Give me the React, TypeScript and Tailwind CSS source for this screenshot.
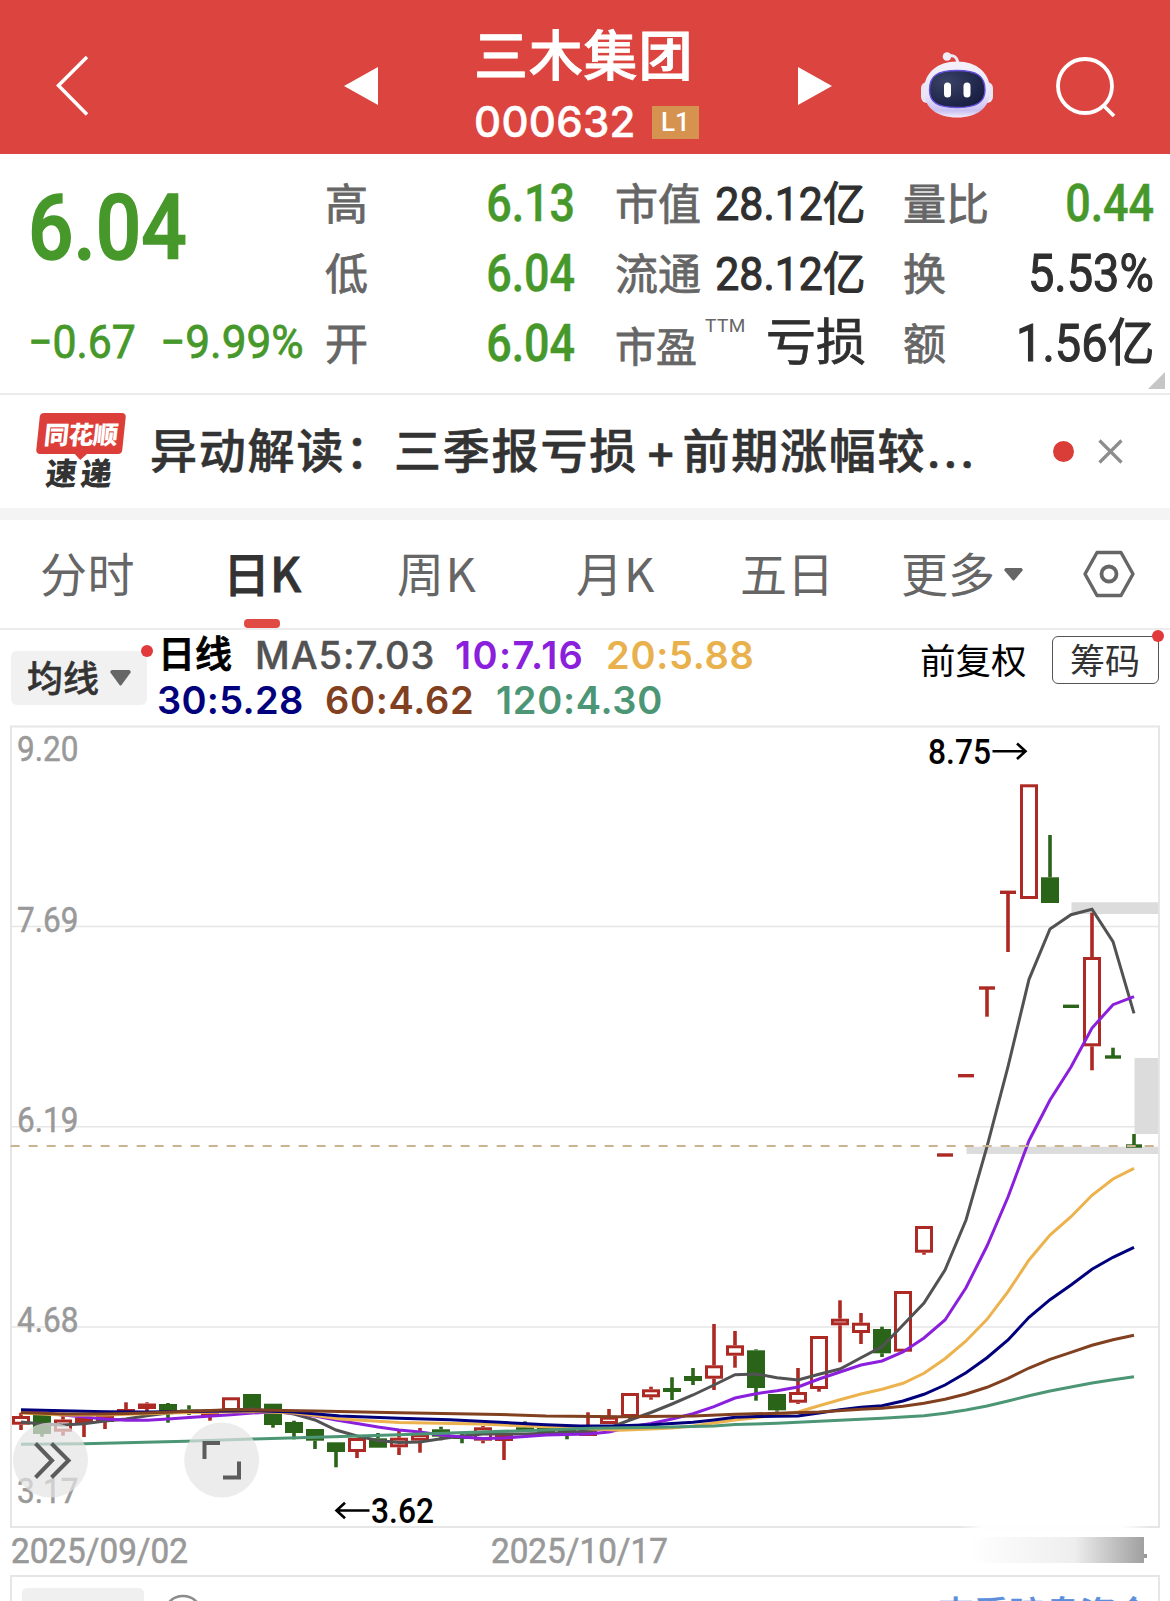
import type { ReactNode } from 'react';

const RED = '#ad2924';
const GREEN = '#296418';

type Kind = 'up' | 'down' | 'upFlat' | 'downFlat';
// kind, body top, body bottom, wick high, wick low
type Candle = [Kind, number, number, number, number];

const STEP = 21;
const FIRST_X = 21;

const candles: Candle[] = [
    ['up', 1416, 1424.7, 1412.7, 1430],
    ['down', 1414, 1434, 1414, 1436.7],
    ['up', 1419.5, 1431.7, 1412.7, 1435.7],
    ['up', 1417.5, 1423.5, 1417.5, 1437],
    ['up', 1416, 1422, 1410.7, 1429],
    ['up', 1409, 1415, 1402.3, 1415],
    ['up', 1403.5, 1409, 1402.3, 1411],
    ['down', 1404, 1411, 1403, 1422.7],
    ['down', 1409.5, 1412, 1405.3, 1415],
    ['up', 1411, 1416, 1411, 1420.7],
    ['up', 1397.3, 1411, 1397.3, 1411],
    ['down', 1394, 1410, 1394, 1410],
    ['down', 1403.7, 1425, 1403.7, 1427.7],
    ['down', 1422, 1433, 1420.7, 1439.3],
    ['down', 1429, 1440.7, 1429, 1449],
    ['down', 1442.3, 1452, 1442.3, 1467.3],
    ['up', 1438, 1452, 1438, 1458],
    ['down', 1438.3, 1447.7, 1433, 1447.7],
    ['up', 1437.7, 1447.3, 1430.7, 1455],
    ['up', 1434, 1440.7, 1428, 1452.7],
    ['down', 1429.3, 1436.7, 1426.7, 1440.3],
    ['down', 1435, 1439, 1432.7, 1443.3],
    ['up', 1427.3, 1440.7, 1426, 1443.3],
    ['up', 1434, 1441, 1434, 1460],
    ['down', 1427.3, 1431, 1421.3, 1431],
    ['down', 1427.5, 1434, 1427.5, 1434],
    ['down', 1430, 1435, 1430, 1439.3],
    ['up', 1430, 1436, 1412.3, 1436],
    ['up', 1416.7, 1424, 1409, 1424],
    ['up', 1393, 1417, 1393, 1420],
    ['up', 1389.3, 1397.3, 1386.7, 1399.7],
    ['down', 1388, 1392, 1377.3, 1400],
    ['down', 1376, 1381, 1368, 1385],
    ['up', 1365.3, 1378.7, 1324, 1390],
    ['up', 1345.3, 1355.7, 1331, 1367.7],
    ['down', 1350.3, 1388, 1349.3, 1400.7],
    ['down', 1394, 1410.3, 1394, 1411.7],
    ['up', 1392, 1402.7, 1368, 1404],
    ['up', 1336, 1389, 1336, 1391.7],
    ['up', 1318.7, 1325.3, 1300.3, 1362.3],
    ['up', 1322.7, 1333, 1313, 1344],
    ['down', 1329, 1353.3, 1326.7, 1357],
    ['up', 1291, 1351.7, 1291, 1351.7],
    ['up', 1226, 1252.7, 1226, 1254.7],
    ['upFlat', 1155, 1155, 1155, 1155],
    ['upFlat', 1075.7, 1075.7, 1075.7, 1075.7],
    ['upFlat', 988, 988, 988, 1016.7],
    ['upFlat', 892.3, 892.3, 892.3, 952],
    ['up', 784.3, 899, 784.3, 899],
    ['down', 877.3, 903, 835, 903],
    ['downFlat', 1006.3, 1006.3, 1006.3, 1006.3],
    ['up', 957, 1046.3, 912.7, 1070.3],
    ['downFlat', 1057, 1057, 1047.7, 1057],
    ['downFlat', 1146, 1146, 1134, 1146],
];

const averages = [
    {
        color: '#525252',
        points: '21,1422 42,1424 63,1425 84,1423.7 105,1421 126,1419 147,1415.7 168,1413 189,1411.5 231,1410 252,1409 273,1411 294,1414 315,1420 336,1430 357,1436 378,1440.5 399,1442.5 420,1442 441,1438.7 462,1436 483,1434 525,1434 567,1432.5 588,1431 609,1428 630,1420 651,1412.5 672,1404 693,1395 714,1385 735,1374.7 756,1374 777,1377.7 798,1380 819,1374.3 840,1369 861,1357.7 882,1346.7 903,1325 924,1303 945,1270 966,1220 987,1146.7 1008,1066.7 1029,979.3 1050,929 1071,914.7 1092,909.3 1113,941.7 1134,1013.3',
    },
    {
        color: '#8a20dc',
        points: '21,1411 42,1413 63,1415 84,1417 105,1419 126,1420.3 147,1420.3 168,1419 189,1417.5 231,1414.7 252,1413 273,1412 294,1413 315,1416 336,1420 357,1423.5 378,1427 399,1430 420,1432 441,1435 462,1437 483,1438.5 504,1438 546,1435 588,1434 609,1432 630,1427 651,1423.5 672,1419 693,1413.7 714,1406.7 735,1398 756,1393.7 777,1390.7 798,1387 819,1379 840,1372 861,1365 882,1361 903,1352 924,1338 945,1320 966,1287.7 987,1246 1008,1197 1029,1140.7 1050,1100 1071,1067 1092,1028 1113,1004.7 1134,996.7',
    },
    {
        color: '#ecb24e',
        points: '21,1413 63,1415 105,1415 168,1413 252,1411.5 294,1413 315,1415.5 340,1419 399,1422.5 480,1424 546,1426.7 600,1429.3 620,1430.3 651,1429 672,1428 693,1426 714,1423 735,1420 756,1417.7 777,1414.5 798,1412 819,1405.7 840,1399.7 861,1394 882,1389.3 903,1383.3 924,1373.3 945,1358.7 966,1341 987,1319.3 1008,1291.7 1029,1260 1050,1235 1071,1216.7 1092,1195.3 1113,1179 1134,1168.3',
    },
    {
        color: '#00007d',
        points: '21,1409.7 105,1411.8 147,1412 189,1411.5 252,1410.7 294,1412 340,1416 399,1418.3 450,1419.8 546,1424.7 580,1426 620,1425.7 651,1424.7 693,1422.3 714,1420 735,1417.3 756,1416.5 777,1416.3 798,1416 819,1413 840,1409.7 861,1407.3 882,1405.7 903,1401 924,1394.3 945,1385 966,1372.7 987,1357.7 1008,1340 1029,1317.3 1050,1299.7 1071,1285 1092,1269.3 1113,1257.3 1134,1247.3',
    },
    {
        color: '#81401f',
        points: '21,1412.5 63,1414 105,1414 147,1413 189,1411.3 231,1409.7 315,1411 399,1412.7 500,1414.5 546,1416 620,1416.7 693,1416 735,1414.3 777,1413.3 819,1412 861,1409.3 882,1408.3 903,1406.3 924,1403.3 945,1399.3 966,1394 987,1387.3 1008,1378.3 1029,1368 1050,1359.3 1071,1352.3 1092,1345.3 1113,1339.7 1134,1335.3',
    },
    {
        color: '#4c9676',
        points: '21,1444.3 84,1443.7 186,1441.3 252,1439 333,1436.7 399,1434.7 450,1433 546,1430 590,1428.3 660,1427.3 714,1426 735,1424.5 777,1423.3 840,1420.3 882,1418.3 924,1415.7 945,1413.3 966,1410 987,1406 1008,1401 1029,1395.7 1050,1391 1071,1387 1092,1383 1113,1379.7 1134,1376.7',
    },
];

const CandleMark = ({ candle, x }: { candle: Candle; x: number }) => {
    const [kind, top, bottom, high, low] = candle;
    const color = kind === 'up' || kind === 'upFlat' ? RED : GREEN;
    const flat = kind === 'upFlat' || kind === 'downFlat';
    return (
        <g stroke={color} strokeWidth={3.6}>
            {high < top && <line x1={x} x2={x} y1={high} y2={top} />}
            {low > bottom && <line x1={x} x2={x} y1={bottom} y2={low} />}
            {flat && <line x1={x - 8} x2={x + 8} y1={top} y2={top} strokeWidth={3.4} />}
            {kind === 'up' && (
                <rect x={x - 7.5} y={top + 1.5} width={15} height={bottom - top - 3} fill="#fff" strokeWidth={3} />
            )}
            {kind === 'down' && <rect x={x - 9} y={top} width={18} height={bottom - top} fill={color} stroke="none" />}
        </g>
    );
};

const AxisText = ({ x, y, children }: { x: number; y: number; children: string }) => (
    <text x={x} y={y} textLength={61.5} lengthAdjust="spacingAndGlyphs" fontSize={35.5} fill="#999" stroke="#999" strokeWidth={0.5}>
        {children}
    </text>
);

const KLineChart = () => (
    <svg className="block" width={1170} height={806} viewBox="0 724 1170 806" fontFamily="Roboto, sans-serif">
        <defs>
            <linearGradient id="fade">
                <stop offset="0" stopColor="#fff" stopOpacity="0" />
                <stop offset="0.12" stopColor="#fefefe" />
                <stop offset="0.85" stopColor="#fefefe" />
                <stop offset="1" stopColor="#fff" stopOpacity="0" />
            </linearGradient>
        </defs>
        <g stroke="#e6e6e6" fill="none">
            <rect x={11} y={726.5} width={1148} height={800.5} strokeWidth={2} />
            <path d="M11 926.5H1159M11 1126.7H1159M11 1327H1159" strokeWidth={1.5} />
        </g>
        <g fill="#dcdcdc">
            <rect x={1071.5} y={902.3} width={86.5} height={11.7} />
            <rect x={1134.5} y={1058} width={23.5} height={76} />
            <rect x={966.5} y={1146.7} width={191.5} height={7.3} />
        </g>
        <AxisText x={17} y={761}>9.20</AxisText>
        <AxisText x={17} y={931.5}>7.69</AxisText>
        <AxisText x={17} y={1132}>6.19</AxisText>
        <AxisText x={17} y={1332}>4.68</AxisText>
        <AxisText x={17} y={1502.5}>3.17</AxisText>

        {candles.map((candle, i) => (
            <CandleMark key={i} candle={candle} x={FIRST_X + i * STEP} />
        ))}
        {averages.map(line => (
            <polyline key={line.color} points={line.points} fill="none" stroke={line.color} strokeWidth={3} />
        ))}
        <line x1={10.7} x2={1158} y1={1146} y2={1146} stroke="#c9b48f" strokeWidth={1.8} strokeDasharray="9 9" />

        <g fontWeight={500} fontSize={35} fill="#000">
            <text x={928} y={764} textLength={63} lengthAdjust="spacingAndGlyphs">8.75</text>
            <text x={371} y={1522.5} textLength={63} lengthAdjust="spacingAndGlyphs">3.62</text>
        </g>
        <g stroke="#000" strokeWidth={2.6} fill="none">
            <path d="M992.5 751.3H1025M1017 743.5L1025.5 751.3L1017 759" />
            <path d="M369.5 1510.5H337M345 1502.7L336.5 1510.5L345 1518.3" />
        </g>

        {/* floating chart controls */}
        <g fill="#e4e4e4" fillOpacity={0.7}>
            <circle cx={50.5} cy={1460} r={37.5} />
            <circle cx={221.7} cy={1460} r={37.5} />
        </g>
        <g fill="none" stroke="#5c5c5c" strokeWidth={4}>
            <path d="M35.5 1443.5L52 1460.5L35.5 1477.5M51.5 1443.5L68.5 1460.5L51.5 1477.5" />
            <path d="M220 1443H204.5V1459M223 1477.5H239V1461.5" />
        </g>
        <rect x={960} y={1524} width={190} height={6} fill="url(#fade)" />
    </svg>
);

const RobotIcon = () => (
    <svg width={74} height={68} viewBox="0 0 74 68">
        <defs>
            <linearGradient id="shell" x1="0" y1="0" x2="0" y2="1">
                <stop offset="0" stopColor="#f4f1fb" />
                <stop offset="0.6" stopColor="#e9e4f8" />
                <stop offset="0.88" stopColor="#c9c0f2" />
                <stop offset="1" stopColor="#f3eefb" />
            </linearGradient>
            <radialGradient id="visor" cx="0.3" cy="0.3" r="0.8">
                <stop offset="0" stopColor="#3a4266" />
                <stop offset="1" stopColor="#161d40" />
            </radialGradient>
        </defs>
        <path d="M26 5.5C33 2.5 38 6 38 14" fill="none" stroke="#ece8f6" strokeWidth={3} />
        <circle cx={27} cy={5.5} r={4.3} fill="#f0edf7" />
        <rect x={1} y={31} width={12} height={21} rx={6} fill="#e9e5f4" />
        <rect x={61} y={31} width={12} height={21} rx={6} fill="#e9e5f4" />
        <path d="M37 10.500C57 10.500 70 22 70 39.500C70 57 57 66.500 37 66.500C17 66.500 4 57 4 39.500C4 22 17 10.500 37 10.500Z" fill="url(#shell)" />
        <path d="M37 19.500C57 19.500 65 25 65 39C65 51 57 56.500 37 56.500C17 56.500 9.500 51 9.500 39C9.500 25 17 19.500 37 19.500Z" fill="url(#visor)" stroke="#6450dc" strokeWidth={1.400} />
        <rect x={24} y={31.500} width={7} height={15} rx={3.500} fill="#fff" />
        <rect x={43.500} y={31.500} width={7} height={15} rx={3.500} fill="#fff" />
    </svg>
);

const Header = () => (
    <header className="flex h-[154px] items-center bg-[#dc443f] pt-[18px] text-white">
        <svg className="ml-[54px]" width={38} height={64} viewBox="0 0 38 64" fill="none" stroke="#fff" strokeWidth={3.5}>
            <path d="M33 3L4.500 31.500L33 60.500" />
        </svg>
        <svg className="ml-[252px]" width={34} height={38} viewBox="0 0 34 38" fill="#fff">
            <path d="M0 19L34 0V38Z" />
        </svg>
        <div className="-mt-[18px] ml-[96px] w-[225px]">
            <h1 className="h-[68px] whitespace-nowrap pt-[5px] text-[54px] font-medium leading-[78px] tracking-[0.8px] [-webkit-text-stroke:0.8px_white]">
                三木集团
            </h1>
            <div className="mt-[22px] flex h-[46px] items-center">
                <span className="font-['Inter'] text-[42px] font-medium leading-none tracking-[0.3px] [-webkit-text-stroke:0.5px_white]">000632</span>
                <span className="ml-[16px] flex h-[33px] w-[48px] items-center justify-center bg-[#d69350] font-['Roboto'] text-[26px] font-medium leading-none">
                    L1
                </span>
            </div>
        </div>
        <svg className="ml-[99px]" width={34} height={38} viewBox="0 0 34 38" fill="#fff">
            <path d="M34 19L0 0V38Z" />
        </svg>
        <div className="ml-[88px] pb-[2px]">
            <RobotIcon />
        </div>
        <svg className="ml-[61px] mt-[1px]" width={62} height={62} viewBox="0 0 62 62" fill="none" stroke="#fff" strokeWidth={3.8}>
            <circle cx={30} cy={30} r={27} />
            <path d="M48 49L59 60" />
        </svg>
    </header>
);

const StatRow = ({ label, children }: { label: ReactNode; children: ReactNode }) => (
    <div className="flex h-[70px] items-center justify-between whitespace-nowrap">
        <span className="text-[43px] leading-[70px] text-[#666] [-webkit-text-stroke:0.8px_#666]">{label}</span>
        {children}
    </div>
);

const Green = ({ children }: { children: string }) => (
    <span className="origin-right scale-x-[0.88] pb-[2px] text-[51px] font-medium leading-[68px] text-[#47982b] [-webkit-text-stroke:0.5px_#47982b]">
        {children}
    </span>
);

const Amount = ({ children }: { children: string }) => (
    <span className="origin-right scale-x-[0.93] pb-[2px] text-[46px] leading-[68px] [-webkit-text-stroke:1.1px_#2f2f2f]">
        {children}
    </span>
);

const BigAmount = ({ children }: { children: string }) => (
    <span className="origin-right scale-x-[0.92] pb-[3px] text-[51px] leading-[67px] [-webkit-text-stroke:1.1px_#2f2f2f]">
        {children}
    </span>
);

const Stats = () => (
    <section className="relative flex h-[241px] border-b-2 border-[#ebebeb] pt-[16px] font-['Roboto','Noto_Sans_CJK_SC',sans-serif]">
        <div className="ml-[28px] w-[297px] whitespace-nowrap text-[#47982b]">
            <div className="h-[137px] origin-left scale-x-[0.89] pt-[11px] text-[90px] font-medium leading-[96px] [-webkit-text-stroke:1.5px_#47982b]">
                6.04
            </div>
            <div className="flex h-[70px] items-center text-[46px] leading-[70px] [-webkit-text-stroke:0.8px_#47982b]">
                <span className="w-[132px] origin-left scale-x-[0.93]">−0.67</span>
                <span className="origin-left scale-x-[0.96]">−9.99%</span>
            </div>
        </div>
        <div className="w-[250px]">
            <StatRow label="高"><Green>6.13</Green></StatRow>
            <StatRow label="低"><Green>6.04</Green></StatRow>
            <StatRow label="开"><Green>6.04</Green></StatRow>
        </div>
        <div className="ml-[40px] w-[251px] text-[#2f2f2f]">
            <StatRow label="市值"><Amount>28.12亿</Amount></StatRow>
            <StatRow label="流通"><Amount>28.12亿</Amount></StatRow>
            <StatRow
                label={
                    <span className="flex text-[41px]">
                        <span className="pt-[5px]">市盈</span>
                        <span className="ml-[8px] h-[40px] text-[19px] leading-[36px] tracking-wide [-webkit-text-stroke:0]">TTM</span>
                    </span>
                }
            >
                <span className="pb-[3px] text-[50px] leading-[67px] [-webkit-text-stroke:0.8px_#2f2f2f]">亏损</span>
            </StatRow>
        </div>
        <div className="ml-[37px] w-[251px] text-[#2f2f2f]">
            <StatRow label="量比"><Green>0.44</Green></StatRow>
            <StatRow label="换"><BigAmount>5.53%</BigAmount></StatRow>
            <StatRow label="额"><BigAmount>1.56亿</BigAmount></StatRow>
        </div>
        <svg className="absolute bottom-[4px] right-[5px]" width={17} height={17} viewBox="0 0 17 17" fill="#c6c6c6">
            <path d="M17 0V17H0Z" />
        </svg>
    </section>
);

const NewsBar = () => (
    <section className="flex h-[113px] items-center">
        <div className="ml-[35px] h-[78px] w-[92px]">
            <div className="relative ml-[3px] flex h-[41px] w-[86px] -skew-x-6 items-center justify-center rounded-[4px] bg-[#dc3f3a]">
                <span className="whitespace-nowrap text-[25px] font-black leading-none tracking-[-0.5px] text-white">同花顺</span>
                <span className="absolute -bottom-[4px] left-[40px] h-[10px] w-[10px] rotate-45 bg-[#dc3f3a]" />
            </div>
            <div className="mt-[1px] -skew-x-6 pl-[11px] text-[31px] font-black leading-[34px] tracking-[4px] text-[#333]">速递</div>
        </div>
        <p className="ml-[23px] w-[840px] whitespace-nowrap pb-[3px] text-[47px] font-medium tracking-[1.8px] text-[#333] [-webkit-text-stroke:0.6px_#333]">
            异动解读：三季报亏损<span className="ml-[7px] font-['Inter'] tracking-[6px]">+</span>前期涨幅较<span className="font-['Inter'] tracking-[2.5px]">...</span>
        </p>
        <span className="ml-[63px] h-[21px] w-[21px] rounded-full bg-[#da3d37]" />
        <svg className="ml-[24px]" width={25} height={25} viewBox="0 0 25 25" stroke="#8d8d8d" strokeWidth={3.2}>
            <path d="M1.500 1.500L23.500 23.500M23.500 1.500L1.500 23.500" />
        </svg>
    </section>
);

const Tabs = () => (
    <nav className="relative flex h-[110px] items-center whitespace-nowrap border-b-2 border-[#ececec] text-[47px] text-[#666]">
        <span className="ml-[40px] w-[183px] pb-[3px] tracking-[0.5px]">分时</span>
        <span className="w-[174px] pb-[3px] font-medium text-[#333] [-webkit-text-stroke:0.8px_#333]">日K</span>
        <span className="w-[179px] pb-[3px] tracking-[1.5px]">周K</span>
        <span className="w-[164px] pb-[3px] tracking-[1px]">月K</span>
        <span className="w-[161px] pb-[3px]">五日</span>
        <span className="w-[103px] pb-[3px]">更多</span>
        <svg width={19} height={13} viewBox="0 0 19 13" fill="#666">
            <path d="M1.500 0H17.500L19 2L10.500 12Q9.500 13 8.500 12L0 2Z" />
        </svg>
        <svg className="ml-[60px]" width={52} height={48} viewBox="0 0 52 48" fill="none" stroke="#666" strokeWidth={3.4}>
            <path d="M14 2.500H38L50 24L38 45.500H14L2 24Z" strokeLinejoin="round" />
            <circle cx={26} cy={24} r={7.500} strokeWidth={3.800} />
        </svg>
        <span className="absolute bottom-0 left-[244px] h-[9px] w-[36px] rounded-[4px] bg-[#e04a43]" />
    </nav>
);

const Legend = () => (
    <section className="flex h-[94px] whitespace-nowrap">
        <div className="relative ml-[11px] mt-[21px] flex h-[54px] w-[136px] items-center rounded-[6px] bg-[#f1f1f1] pl-[16px] text-[36px] font-medium text-[#333] [-webkit-text-stroke:0.5px_#333]">
            <span className="pb-[4px]">均线</span>
            <svg className="ml-[11px]" width={21} height={16} viewBox="0 0 21 16" fill="#666">
                <path d="M1.500 0H19.500L21 2L11.500 15Q10.500 16 9.500 15L0 2Z" />
            </svg>
            <span className="absolute -right-[6px] -top-[6px] h-[12px] w-[12px] rounded-full bg-[#e23a3c]" />
        </div>
        <div className="ml-[10px] w-[763px] pt-[3px] font-['Inter','Noto_Sans_CJK_SC',sans-serif] text-[38px] font-semibold leading-[44px] tracking-[0.7px]">
            <div className="flex h-[45px]">
                <span className="w-[98px] pl-[1px] text-[37px] font-medium tracking-normal text-black [-webkit-text-stroke:0.9px_black]">日线</span>
                <span className="w-[200px] font-medium tracking-[1px] text-[#525252] [-webkit-text-stroke:0.4px_#525252]">MA5:7.03</span>
                <span className="w-[151px] tracking-[1.4px] text-[#8a20dc]">10:7.16</span>
                <span className="text-[#e9b14d]">20:5.88</span>
            </div>
            <div className="flex">
                <span className="w-[168px] tracking-[0.3px] text-[#00007d]">30:5.28</span>
                <span className="w-[171px] text-[#81401f]">60:4.62</span>
                <span className="text-[#4c9676]">120:4.30</span>
            </div>
        </div>
        <span className="pt-[2px] text-[35.500px] leading-[54px] text-black">前复权</span>
        <div className="relative ml-[25px] mt-[6px] flex h-[48px] w-[107px] items-center justify-center rounded-[6px] border border-[#555] text-[35px] leading-none text-[#333]">
            <span className="pb-[4px]">筹码</span>
            <span className="absolute -right-[6px] -top-[7px] h-[12px] w-[12px] rounded-full bg-[#e23a3c]" />
        </div>
    </section>
);

const Dates = () => (
    <div className="flex h-[45px] items-start whitespace-nowrap pt-[2px] font-['Roboto'] text-[35px] leading-[40px] text-[#999]">
        <span className="ml-[11px] w-[480px] [-webkit-text-stroke:0.6px_#999]">
            <span className="inline-block origin-left scale-x-[0.95]">2025/09/02</span>
        </span>
        <span className="w-[479px] [-webkit-text-stroke:0.6px_#999]">
            <span className="inline-block origin-left scale-x-[0.95]">2025/10/17</span>
        </span>
        <span className="mt-[5px] h-[26px] w-[174px] bg-linear-to-r from-white from-0% via-[#eeeeee] via-60% to-[#a0a0a0]" />
        <span className="mt-[22px] h-[4px] w-[3px] bg-[#999]" />
    </div>
);

const VolumePanel = () => (
    <section className="ml-[10px] flex h-[60px] w-[1150px] border-2 border-[#e6e6e6]">
        <span className="ml-[10px] mt-[11px] h-[50px] w-[122px] rounded-[5px] bg-[#f0f0f0]" />
        <svg className="ml-[18px] mt-[17px]" width={42} height={42} viewBox="0 0 42 42" fill="none" stroke="#8c8c8c" strokeWidth={2.5}>
            <circle cx={21} cy={21} r={19} />
        </svg>
        <span className="ml-auto mr-[7px] mt-[12px] whitespace-nowrap text-[35.500px] font-medium leading-[46px] text-[#5b8fdc] [-webkit-text-stroke:0.6px_#5b8fdc]">
            查看暗盘资金
        </span>
    </section>
);

const App = () => (
    <div className="h-[1601px] w-[1170px] overflow-hidden bg-white font-['Noto_Sans_CJK_SC',sans-serif]">
        <Header />
        <Stats />
        <NewsBar />
        <div className="h-[12px] bg-[#f4f4f4]" />
        <Tabs />
        <Legend />
        <KLineChart />
        <Dates />
        <VolumePanel />
    </div>
);

export default App;
